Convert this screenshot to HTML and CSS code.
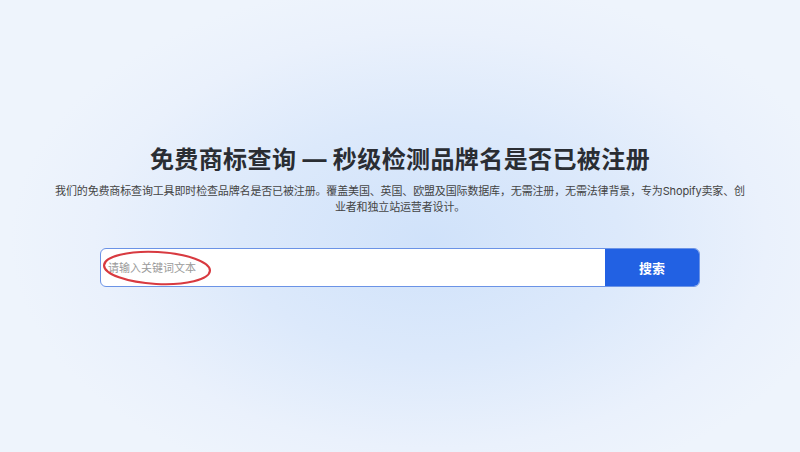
FILE: index.html
```html
<!DOCTYPE html>
<html lang="zh-CN">
<head>
<meta charset="utf-8">
<title>免费商标查询</title>
<link rel="stylesheet" href="styles.css">
</head>
<body>
<main class="page">
  <section class="hero">
    <h1 class="title">免费商标查询 — 秒级检测品牌名是否已被注册</h1>
    <p class="lead">我们的免费商标查询工具即时检查品牌名是否已被注册。覆盖美国、英国、欧盟及国际数据库，无需注册，无需法律背景，专为Shopify卖家、创业者和独立站运营者设计。</p>
    <form class="search" onsubmit="return false">
      <div class="field">
        <input class="input" type="text" placeholder="请输入关键词文本">
        <svg class="mark" width="112" height="40" viewBox="0 0 112 40" aria-hidden="true">
          <ellipse cx="56" cy="19" rx="53" ry="16" transform="rotate(3 56 19)" fill="none" stroke="#d83a40" stroke-width="2.2"/>
        </svg>
      </div>
      <button class="btn" type="submit">搜索</button>
    </form>
  </section>
</main>
</body>
</html>
```

FILE: styles.css
```css
* { box-sizing: border-box; }
html, body { margin: 0; height: 100%; }
body {
  font-family: Inter, "Noto Sans CJK SC", sans-serif;
  background: radial-gradient(ellipse 420px 260px at 430px 240px, #d0e2fa 0%, #dce9fb 45%, #eaf1fc 80%, #eef4fc 100%);
  color: #333;
}
.page {
  height: 452px;
  display: flex;
  justify-content: center;
  padding-top: 143px;
}
.hero {
  width: 696px;
  display: flex;
  flex-direction: column;
  align-items: center;
}
.title {
  margin: 0;
  font-size: 24px;
  line-height: 34px;
  font-weight: 700;
  color: #2a2d33;
  letter-spacing: 0.4px;
}
.lead {
  margin: 6px 0 0;
  font-size: 11px;
  line-height: 16px;
  color: #444;
  text-align: center;
  letter-spacing: -0.15px;
}
.search {
  margin-top: 33px;
  width: 600px;
  height: 39px;
  display: flex;
  border: 1px solid #6b93e6;
  border-radius: 6px;
  overflow: hidden;
  background: #fff;
}
.field {
  position: relative;
  flex: 1;
  display: flex;
}
.input {
  flex: 1;
  border: 0;
  outline: 0;
  padding: 0 7px;
  font-family: Inter, "Noto Sans CJK SC", sans-serif;
  font-size: 11px;
  color: #333;
  background: transparent;
}
.input::placeholder { color: #9a9a9a; }
.mark {
  position: absolute;
  left: 0;
  top: 0;
  pointer-events: none;
}
.btn {
  width: 94px;
  border: 0;
  background: #2261e3;
  color: #fff;
  font-family: Inter, "Noto Sans CJK SC", sans-serif;
  font-size: 13px;
  font-weight: 700;
  cursor: pointer;
}
```
